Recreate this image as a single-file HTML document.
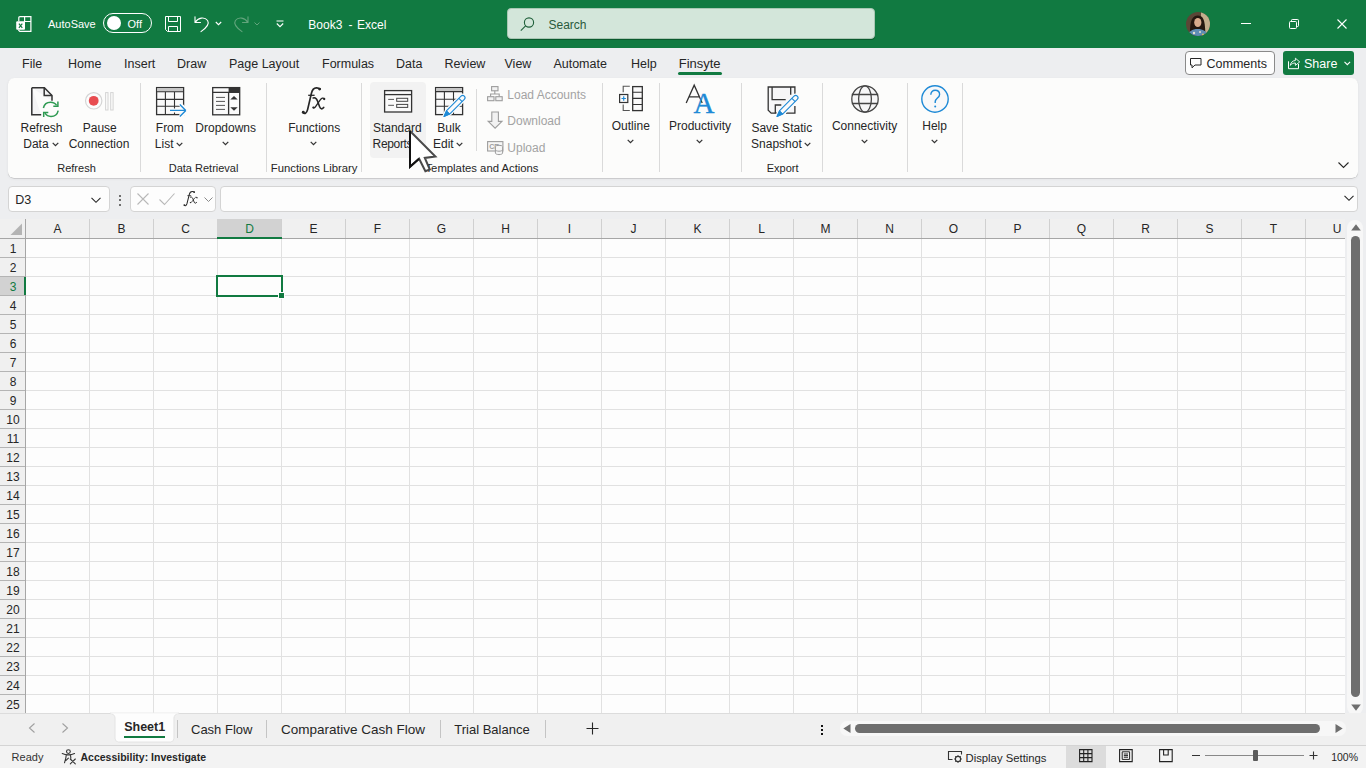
<!DOCTYPE html>
<html><head><meta charset="utf-8"><style>
html,body{margin:0;padding:0;}
body{width:1366px;height:768px;position:relative;overflow:hidden;background:#edeef0;font-family:"Liberation Sans",sans-serif;color:#262626;}
.t{position:absolute;line-height:1;white-space:pre;}
.i{position:absolute;overflow:visible;}
.b{position:absolute;box-sizing:border-box;}
</style></head><body>
<div class="b" style="left:0px;top:0px;width:1366px;height:48px;background:#117a41;"></div>
<svg class="i" style="left:16px;top:16px;" width="16" height="16" viewBox="0 0 16 16"><path d="M2.8 5.3V1.8Q2.8 0.6 4 0.6H14.9V15.4H3.8L2.4 14 M8.6 0.6V5.5H14.9" fill="none" stroke="#fff" stroke-width="1.2"/><rect x="0.2" y="5.3" width="8.8" height="8.5" rx="1" fill="#fff"/><path d="M2.9 7.6l3.4 4.2 M6.3 7.6l-3.4 4.2" stroke="#117a41" stroke-width="1.2"/></svg>
<div class="t" style="top:19.00px;font-size:11px;color:#fff;left:48px;">AutoSave</div>
<div class="b" style="left:103px;top:13px;width:49px;height:20px;border:1px solid #fff;border-radius:10px;"></div>
<div class="b" style="left:107px;top:16px;width:14px;height:14px;background:#fff;border-radius:50%;"></div>
<div class="t" style="top:19.00px;font-size:11px;color:#fff;left:127.5px;">Off</div>
<svg class="i" style="left:165px;top:16px;" width="16" height="16" viewBox="0 0 16 16"><path d="M0.5 0.5h15v15h-13l-2-2z" fill="none" stroke="#fff"/><path d="M3.5 0.5v5h9v-5 M3.5 15.5v-5h9v5" fill="none" stroke="#fff"/></svg>
<svg class="i" style="left:194px;top:16px;" width="16" height="16" viewBox="0 0 16 16"><path d="M1 0.8v5.7h5.5 M1.3 6.3C4 1.5 10.5 0.5 13.6 4.5C15.5 7.5 13.5 11 7 15.6" fill="none" stroke="#fff" stroke-width="1.1" stroke-linecap="round" stroke-linejoin="round"/></svg>
<svg class="i" style="left:215px;top:21px;" width="7" height="5" viewBox="0 0 7 5"><path d="M0.8 1l2.7 2.7l2.7-2.7" fill="none" stroke="#fff" stroke-width="1.1"/></svg>
<svg class="i" style="left:233px;top:16px;" width="16" height="16" viewBox="0 0 16 16"><path d="M15 0.8v5.7h-5.5 M14.7 6.3C12 1.5 5.5 0.5 2.4 4.5C0.5 7.5 2.5 11 9 15.6" fill="none" stroke="#62a47c" stroke-width="1.1" stroke-linecap="round" stroke-linejoin="round"/></svg>
<svg class="i" style="left:254px;top:22px;" width="6" height="4" viewBox="0 0 6 4"><path d="M0.5 0.5l2.5 2.5l2.5-2.5" fill="none" stroke="#62a47c" stroke-width="1"/></svg>
<svg class="i" style="left:276px;top:20px;" width="8" height="8" viewBox="0 0 8 8"><path d="M0.5 1h7 M0.8 3.5l3.2 3.2l3.2-3.2" fill="none" stroke="#fff" stroke-width="1.1"/></svg>
<div class="t" style="top:19.00px;font-size:12px;color:#fff;left:175.3px;width:300px;text-align:center;">Book3</div>
<div class="t" style="top:19.00px;font-size:12px;color:#fff;left:200.5px;width:300px;text-align:center;">-</div>
<div class="t" style="top:19.00px;font-size:12px;color:#fff;left:221.7px;width:300px;text-align:center;">Excel</div>
<div class="b" style="left:507px;top:8px;width:368px;height:31px;background:#d3e6da;border:1px solid #a9c7b4;border-radius:4px;box-shadow:0 1px 0 #0a5a2e;"></div>
<svg class="i" style="left:520px;top:17px;" width="15" height="14" viewBox="0 0 15 14"><circle cx="9" cy="5.5" r="4.6" fill="none" stroke="#1f5f3a" stroke-width="1.1"/><path d="M5.6 8.9L0.8 13.6" stroke="#1f5f3a" stroke-width="1.1"/></svg>
<div class="t" style="top:19.00px;font-size:12px;color:#2a5a3c;left:548.5px;">Search</div>
<svg class="i" style="left:1186px;top:12px;" width="24" height="24" viewBox="0 0 24 24"><defs><clipPath id="avc"><circle cx="12" cy="12" r="12"/></clipPath></defs><g clip-path="url(#avc)"><rect width="24" height="24" fill="#5a4636"/><rect x="15" width="9" height="24" fill="#c2ae8c"/><path d="M4 24C4 14 4 4 11.5 3.5C19 3 19 12 19.5 24z" fill="#24170f"/><ellipse cx="11.8" cy="10.5" rx="3.6" ry="4.6" fill="#d9ab8c"/><path d="M2 24c1-5 4-7 9.5-7s9 2 10.5 7z" fill="#5f8db5"/><circle cx="8" cy="21" r="1.2" fill="#e8e0d0"/><circle cx="14" cy="20" r="1" fill="#e8e0d0"/><circle cx="17" cy="22.5" r="1.1" fill="#d8c060"/></g></svg>
<div class="b" style="left:1241px;top:23px;width:10px;height:1px;background:#fff;"></div>
<svg class="i" style="left:1289px;top:19px;" width="10" height="10" viewBox="0 0 10 10"><path d="M2.5 2.5v-1.2c0-.5.3-.8.8-.8h5.4c.5 0 .8.3.8.8v5.4c0 .5-.3.8-.8.8h-1.2" fill="none" stroke="#fff"/><rect x="0.5" y="2.5" width="7" height="7" rx="1" fill="none" stroke="#fff"/></svg>
<svg class="i" style="left:1337px;top:19px;" width="10" height="10" viewBox="0 0 10 10"><path d="M0.5 0.5l9 9 M9.5 0.5l-9 9" stroke="#fff" stroke-width="1.1"/></svg>
<div class="t" style="top:58.00px;font-size:12.5px;color:#262626;left:22px;">File</div>
<div class="t" style="top:58.00px;font-size:12.5px;color:#262626;left:68px;">Home</div>
<div class="t" style="top:58.00px;font-size:12.5px;color:#262626;left:124px;">Insert</div>
<div class="t" style="top:58.00px;font-size:12.5px;color:#262626;left:177px;">Draw</div>
<div class="t" style="top:58.00px;font-size:12.5px;color:#262626;left:229px;">Page Layout</div>
<div class="t" style="top:58.00px;font-size:12.5px;color:#262626;left:322px;">Formulas</div>
<div class="t" style="top:58.00px;font-size:12.5px;color:#262626;left:396px;">Data</div>
<div class="t" style="top:58.00px;font-size:12.5px;color:#262626;left:444.4px;">Review</div>
<div class="t" style="top:58.00px;font-size:12.5px;color:#262626;left:504.5px;">View</div>
<div class="t" style="top:58.00px;font-size:12.5px;color:#262626;left:553.4px;">Automate</div>
<div class="t" style="top:58.00px;font-size:12.5px;color:#262626;left:631px;">Help</div>
<div class="t" style="top:57.00px;font-size:13px;color:#262626;left:678.7px;">Finsyte</div>
<div class="b" style="left:678px;top:72px;width:44px;height:3px;background:#117a41;border-radius:2px;"></div>
<div class="b" style="left:1185px;top:51px;width:90px;height:24px;background:#fdfdfd;border:1px solid #8a8a8a;border-radius:4px;"></div>
<svg class="i" style="left:1190px;top:58px;" width="12" height="10" viewBox="0 0 12 10"><path d="M0.5 0.5h10.5v6.5h-6l-3 2.8v-2.8h-1.5z" fill="none" stroke="#262626" stroke-width="1"/></svg>
<div class="t" style="top:58.00px;font-size:12.5px;color:#262626;left:1206.5px;">Comments</div>
<div class="b" style="left:1283px;top:51px;width:71px;height:24px;background:#117a41;border-radius:3px;"></div>
<svg class="i" style="left:1288px;top:57px;" width="13" height="13" viewBox="0 0 13 13"><path d="M0.5 4.3V11.7H10.5V6.9" fill="none" stroke="#fff" stroke-width="1"/><path d="M2.3 8.3C2.8 5.4 4.8 3.6 7.4 3.5V1.2L11.7 4.9L7.4 8.4V6C5.3 6 3.6 6.8 2.3 8.3Z" fill="none" stroke="#fff" stroke-width="0.9" stroke-linejoin="round"/></svg>
<div class="t" style="top:58.00px;font-size:12.5px;color:#fff;left:1304px;">Share</div>
<svg class="i" style="left:1344px;top:61px;" width="7" height="5" viewBox="0 0 7 5"><path d="M0.5 0.8l2.8 2.8l2.8-2.8" fill="none" stroke="#fff" stroke-width="1.1"/></svg>
<div class="b" style="left:8px;top:78px;width:1350px;height:100px;background:#fcfcfb;border-radius:6px;box-shadow:0 0.5px 0.5px rgba(0,0,0,0.22),0 1px 3px rgba(0,0,0,0.06);"></div>
<div class="b" style="left:140px;top:83px;width:1px;height:89px;background:#dadada;"></div>
<div class="b" style="left:266px;top:83px;width:1px;height:89px;background:#dadada;"></div>
<div class="b" style="left:361px;top:83px;width:1px;height:89px;background:#dadada;"></div>
<div class="b" style="left:602px;top:83px;width:1px;height:89px;background:#dadada;"></div>
<div class="b" style="left:659px;top:83px;width:1px;height:89px;background:#dadada;"></div>
<div class="b" style="left:741px;top:83px;width:1px;height:89px;background:#dadada;"></div>
<div class="b" style="left:822px;top:83px;width:1px;height:89px;background:#dadada;"></div>
<div class="b" style="left:907px;top:83px;width:1px;height:89px;background:#dadada;"></div>
<div class="b" style="left:962px;top:83px;width:1px;height:89px;background:#dadada;"></div>
<div class="b" style="left:476px;top:89px;width:1px;height:62px;background:#dadada;"></div>
<div class="b" style="left:370px;top:82px;width:56px;height:76px;background:#f2f2f2;border-radius:4px;"></div>
<div class="t" style="top:122.00px;font-size:12px;color:#262626;left:-108.5px;width:300px;text-align:center;">Refresh</div>
<div class="t" style="top:138.00px;font-size:12px;color:#262626;left:-114.1px;width:300px;text-align:center;">Data</div>
<svg class="i" style="left:52px;top:141.6px;" width="7" height="5" viewBox="0 0 7 5"><path d="M0.7 0.9l2.8 2.8l2.8-2.8" fill="none" stroke="#333" stroke-width="1.25"/></svg>
<div class="t" style="top:122.00px;font-size:12px;color:#262626;left:-50.25px;width:300px;text-align:center;">Pause</div>
<div class="t" style="top:138.00px;font-size:12px;color:#262626;left:-51px;width:300px;text-align:center;">Connection</div>
<div class="t" style="top:163.00px;font-size:11px;color:#262626;left:-73.5px;width:300px;text-align:center;">Refresh</div>
<div class="t" style="top:122.00px;font-size:12px;color:#262626;left:19.80000000000001px;width:300px;text-align:center;">From</div>
<div class="t" style="top:138.00px;font-size:12px;color:#262626;left:14.199999999999989px;width:300px;text-align:center;">List</div>
<svg class="i" style="left:176.3px;top:141.6px;" width="7" height="5" viewBox="0 0 7 5"><path d="M0.7 0.9l2.8 2.8l2.8-2.8" fill="none" stroke="#333" stroke-width="1.25"/></svg>
<div class="t" style="top:122.00px;font-size:12px;color:#262626;left:75.69999999999999px;width:300px;text-align:center;">Dropdowns</div>
<svg class="i" style="left:222.2px;top:141.4px;" width="7" height="5" viewBox="0 0 7 5"><path d="M0.7 0.9l2.8 2.8l2.8-2.8" fill="none" stroke="#333" stroke-width="1.25"/></svg>
<div class="t" style="top:163.00px;font-size:11px;color:#262626;left:53.599999999999994px;width:300px;text-align:center;">Data Retrieval</div>
<div class="t" style="top:122.00px;font-size:12px;color:#262626;left:164.2px;width:300px;text-align:center;">Functions</div>
<svg class="i" style="left:310.2px;top:141.4px;" width="7" height="5" viewBox="0 0 7 5"><path d="M0.7 0.9l2.8 2.8l2.8-2.8" fill="none" stroke="#333" stroke-width="1.25"/></svg>
<div class="t" style="top:163.00px;font-size:11.3px;color:#262626;left:164.2px;width:300px;text-align:center;">Functions Library</div>
<div class="t" style="top:122.00px;font-size:12px;color:#262626;left:247.3px;width:300px;text-align:center;">Standard</div>
<div class="t" style="top:138.00px;font-size:12px;color:#262626;left:372.6px;letter-spacing:-0.35px;">Reports</div>
<div class="t" style="top:122.00px;font-size:12px;color:#262626;left:299px;width:300px;text-align:center;">Bulk</div>
<div class="t" style="top:138.00px;font-size:12px;color:#262626;left:293.3px;width:300px;text-align:center;">Edit</div>
<svg class="i" style="left:456.4px;top:141.6px;" width="7" height="5" viewBox="0 0 7 5"><path d="M0.7 0.9l2.8 2.8l2.8-2.8" fill="none" stroke="#333" stroke-width="1.25"/></svg>
<div class="t" style="top:89.00px;font-size:12px;color:#a3a3a3;left:507.3px;">Load Accounts</div>
<div class="t" style="top:115.00px;font-size:12px;color:#a3a3a3;left:507.3px;">Download</div>
<div class="t" style="top:142.00px;font-size:12px;color:#a3a3a3;left:507.3px;">Upload</div>
<div class="t" style="top:163.00px;font-size:11.3px;color:#262626;left:332px;width:300px;text-align:center;">Templates and Actions</div>
<div class="t" style="top:120.00px;font-size:12px;color:#262626;left:480.79999999999995px;width:300px;text-align:center;">Outline</div>
<svg class="i" style="left:627.2px;top:139.4px;" width="7" height="5" viewBox="0 0 7 5"><path d="M0.7 0.9l2.8 2.8l2.8-2.8" fill="none" stroke="#333" stroke-width="1.25"/></svg>
<div class="t" style="top:120.00px;font-size:12px;color:#262626;left:550px;width:300px;text-align:center;">Productivity</div>
<svg class="i" style="left:696.2px;top:139.4px;" width="7" height="5" viewBox="0 0 7 5"><path d="M0.7 0.9l2.8 2.8l2.8-2.8" fill="none" stroke="#333" stroke-width="1.25"/></svg>
<div class="t" style="top:122.00px;font-size:12px;color:#262626;left:631.8px;width:300px;text-align:center;">Save Static</div>
<div class="t" style="top:138.00px;font-size:12px;color:#262626;left:626.4px;width:300px;text-align:center;">Snapshot</div>
<svg class="i" style="left:804.2px;top:141.6px;" width="7" height="5" viewBox="0 0 7 5"><path d="M0.7 0.9l2.8 2.8l2.8-2.8" fill="none" stroke="#333" stroke-width="1.25"/></svg>
<div class="t" style="top:163.00px;font-size:11px;color:#262626;left:632.6px;width:300px;text-align:center;">Export</div>
<div class="t" style="top:120.00px;font-size:12px;color:#262626;left:714.6px;width:300px;text-align:center;">Connectivity</div>
<svg class="i" style="left:861.2px;top:139.4px;" width="7" height="5" viewBox="0 0 7 5"><path d="M0.7 0.9l2.8 2.8l2.8-2.8" fill="none" stroke="#333" stroke-width="1.25"/></svg>
<div class="t" style="top:120.00px;font-size:12px;color:#262626;left:784.6px;width:300px;text-align:center;">Help</div>
<svg class="i" style="left:931.2px;top:139.4px;" width="7" height="5" viewBox="0 0 7 5"><path d="M0.7 0.9l2.8 2.8l2.8-2.8" fill="none" stroke="#333" stroke-width="1.25"/></svg>
<svg class="i" style="left:1338px;top:162px;" width="11" height="6" viewBox="0 0 11 6"><path d="M0.5 0.5l5 5l5-5" fill="none" stroke="#262626" stroke-width="1.1"/></svg>
<svg class="i" style="left:30px;top:86px;" width="30" height="32" viewBox="0 0 30 32"><path d="M1.8 1.8h12.6l7.6 7.8v5.2 M11.2 28.7h-9.4v-26.9" fill="#f4f4f5" stroke="#333" stroke-width="1.5" stroke-linejoin="miter"/><path d="M14.2 1.8v7.8h7.8" fill="none" stroke="#333" stroke-width="1.5"/><path d="M13.4 22c0.8-3.6 3.6-5.8 7.2-5.8c2.6 0 4.8 1.2 6 3.2 M28.2 24.6c-0.8 3.6-3.6 5.8-7.2 5.8c-2.6 0-4.8-1.2-6-3.2" fill="none" stroke="#2e9a52" stroke-width="1.5"/><path d="M27.9 15.6v4.6h-4.6 M13.7 31v-4.6h4.6" fill="none" stroke="#2e9a52" stroke-width="1.5"/></svg>
<svg class="i" style="left:84px;top:91px;" width="30" height="20" viewBox="0 0 30 20"><circle cx="9.7" cy="9.8" r="8.2" fill="#fcfcfc" stroke="#d4d4d4" stroke-width="1.2"/><circle cx="9.7" cy="9.8" r="4.9" fill="#e84c50"/><rect x="21.6" y="1.6" width="2.4" height="17.4" fill="none" stroke="#d4d4d4" stroke-width="1"/><rect x="26.7" y="1.6" width="2.4" height="17.4" fill="none" stroke="#d4d4d4" stroke-width="1"/></svg>
<svg class="i" style="left:155px;top:86px;" width="33" height="32" viewBox="0 0 33 32"><rect x="1.6" y="1.6" width="27" height="27" fill="#fafafa" stroke="#333" stroke-width="1.3"/><rect x="2.2" y="2.2" width="25.8" height="3.6" fill="#c6c6c6"/><path d="M1.6 5.8h27 M10.4 5.8v23 M19.5 5.8v23 M1.6 13.4h27 M1.6 20.3h27" fill="none" stroke="#333" stroke-width="1.1"/><path d="M14 24.4h17 M31.5 24.4l-6.5-6.3 M31.5 24.4l-6.5 6.3" fill="none" stroke="#fcfcfc" stroke-width="4"/><path d="M15 24.4h15.5 M30.8 24.4l-6-6 M30.8 24.4l-6 6" fill="none" stroke="#1f8ad6" stroke-width="1.4"/></svg>
<svg class="i" style="left:211px;top:86px;" width="30" height="30" viewBox="0 0 30 30"><rect x="1.7" y="1.6" width="27" height="27.2" fill="#fafafa" stroke="#333" stroke-width="1.3"/><rect x="17.6" y="1.6" width="11.1" height="5" fill="#333"/><path d="M1.7 6.4h27 M17.6 6.4v22.4" stroke="#333" stroke-width="1.3"/><path d="M5 11.4h9 M5 15.4h9 M5 19.4h9 M5 23.4h9" stroke="#555" stroke-width="1"/><path d="M19.3 13.6l3.7-3.5l3.7 3.5z M19.3 21.2l3.7 3.5l3.7-3.5z" fill="#333"/></svg>
<svg class="i" style="left:301px;top:87px;" width="25" height="28" viewBox="0 0 25 28"><path d="M1.9 25.4C3.6 27.4 5.6 26.4 6.6 22.6L10.4 6.4C11.3 2.4 13.4 0.8 15.6 0.9C17 1 18.3 1.4 18.9 1.9" fill="none" stroke="#262626" stroke-width="1.7" stroke-linecap="round"/><circle cx="18.6" cy="2.1" r="1.45" fill="#262626"/><circle cx="2.3" cy="25.2" r="1.45" fill="#262626"/><path d="M7.2 8.3H13.6" stroke="#262626" stroke-width="1.3"/><path d="M12.2 10.9C14.4 10.2 15.5 11.2 16.4 13.8L18.6 19.8C19.6 22.4 21 22.4 22.7 20.4" fill="none" stroke="#262626" stroke-width="1.6" stroke-linecap="round"/><path d="M23.3 11.8C22.2 10.6 20.8 10.9 19.4 12.6L15.1 18.9C14 20.6 13 21.1 12.3 20.5" fill="none" stroke="#262626" stroke-width="1.3" stroke-linecap="round"/><circle cx="23.2" cy="12" r="1.15" fill="#262626"/><circle cx="12.4" cy="20.6" r="1.1" fill="#262626"/></svg>
<svg class="i" style="left:383px;top:89px;" width="30" height="24" viewBox="0 0 30 24"><rect x="1.6" y="1.6" width="27" height="21.4" fill="#fafafa" stroke="#333" stroke-width="1.3"/><path d="M1.6 5.6h27" stroke="#333" stroke-width="1.3"/><path d="M5.2 10.4h5.8 M5.2 16.3h5.8" stroke="#555" stroke-width="1"/><rect x="13.7" y="9.3" width="11" height="3" fill="none" stroke="#444" stroke-width="1"/><rect x="13.7" y="15.4" width="11" height="3" fill="none" stroke="#444" stroke-width="1"/></svg>
<svg class="i" style="left:434px;top:86px;" width="34" height="32" viewBox="0 0 34 32"><rect x="1.6" y="1.6" width="27" height="27" fill="#fafafa" stroke="#333" stroke-width="1.3"/><rect x="2.2" y="2.2" width="25.8" height="3.4" fill="#c6c6c6"/><path d="M1.6 5.6h27 M10.4 5.6v23 M19.5 5.6v23 M1.6 13.2h27 M1.6 20.3h27" fill="none" stroke="#333" stroke-width="1.1"/><path d="M10 30.5L12.61 24.63L27.04 10.2A2.3 2.3 0 0 1 30.3 13.46L15.87 27.89Z" fill="#fcfcfc" stroke="#fcfcfc" stroke-width="3.5"/><path d="M10 30.5L12.61 24.63L27.04 10.2A2.3 2.3 0 0 1 30.3 13.46L15.87 27.89Z" fill="#fafafa" stroke="#1f8ad6" stroke-width="1.15" stroke-linejoin="round"/><path d="M10 30.5L12.61 24.63L15.87 27.89Z" fill="#1f8ad6" stroke="#1f8ad6" stroke-width="0.8"/><path d="M24.92 12.32L28.18 15.58" stroke="#1f8ad6" stroke-width="1.1"/></svg>
<svg class="i" style="left:486px;top:85px;" width="18" height="17" viewBox="0 0 18 17"><rect x="5.6" y="1.6" width="6.4" height="4.2" fill="#f2f2f2" stroke="#9d9d9d" stroke-width="1.1"/><path d="M8.8 5.8v3.2 M4.6 11.7v-2.7h8.6v2.7" fill="none" stroke="#9d9d9d" stroke-width="1.1"/><rect x="1.6" y="11.7" width="6.4" height="4" fill="#f2f2f2" stroke="#9d9d9d" stroke-width="1.1"/><rect x="9.8" y="11.7" width="6.4" height="4" fill="#f2f2f2" stroke="#9d9d9d" stroke-width="1.1"/></svg>
<svg class="i" style="left:487px;top:111px;" width="16" height="18" viewBox="0 0 16 18"><path d="M4.8 1v9.4h-3.6l6.9 6.8l6.9-6.8h-3.6v-9.4z" fill="#f2f2f2" stroke="#9d9d9d" stroke-width="1.1" stroke-linejoin="miter"/></svg>
<svg class="i" style="left:486px;top:140px;" width="18" height="15" viewBox="0 0 18 15"><rect x="1.6" y="1.6" width="15.3" height="9.4" fill="#f6f6f6" stroke="#9d9d9d" stroke-width="1.1"/><text x="3.2" y="9" font-size="7" font-family="Liberation Sans" font-weight="700" fill="#9d9d9d">CR</text><ellipse cx="13" cy="6.8" rx="3.6" ry="1.5" fill="#f6f6f6" stroke="#9d9d9d" stroke-width="1"/><path d="M9.4 6.8v6.3c0 0.8 1.6 1.5 3.6 1.5s3.6-0.7 3.6-1.5v-6.3 M9.4 9.7c0 0.8 1.6 1.5 3.6 1.5s3.6-0.7 3.6-1.5" fill="#f6f6f6" stroke="#9d9d9d" stroke-width="1"/></svg>
<svg class="i" style="left:618px;top:85px;" width="26" height="27" viewBox="0 0 26 27"><path d="M11.8 1.3h-6.6v6 M5.2 19.5v6h6.6" fill="none" stroke="#555" stroke-width="1.1"/><rect x="14.7" y="1.6" width="9.6" height="24" fill="#fafafa" stroke="#333" stroke-width="1.3"/><path d="M14.7 7.3h9.6 M14.7 13.4h9.6 M14.7 19.5h9.6" stroke="#333" stroke-width="1.1"/><rect x="1.6" y="9.5" width="8.2" height="8" fill="#fafafa" stroke="#333" stroke-width="1.2"/><path d="M5.7 11.3v4.4 M3.5 13.5h4.4" stroke="#1f8ad6" stroke-width="1.2"/></svg>
<svg class="i" style="left:685px;top:84px;" width="18" height="21" viewBox="0 0 18 21"><path d="M1.2 19L9.2 1.2L17.2 19 M4 12.8H14.4" fill="none" stroke="#333" stroke-width="1.3"/></svg>
<div class="t" style="left:693.5px;top:88.5px;font-size:29px;font-family:'Liberation Serif',serif;color:#1f8ad6;line-height:1;font-weight:400;-webkit-text-stroke:0.35px #1f8ad6;">A</div>
<svg class="i" style="left:767px;top:86px;" width="33" height="32" viewBox="0 0 33 32"><path d="M27.9 8.5v-7.5h-26.7v23.2l3 3h7.3 M19 27.2h8.9v-7.2" fill="#f6f6f7" stroke="#333" stroke-width="1.3"/><path d="M5.1 1v12.6h13.6 M23.7 1v7.8" fill="none" stroke="#333" stroke-width="1.3"/><path d="M8.3 27.2v-8.2h6" fill="none" stroke="#333" stroke-width="1.3"/><path d="M10 30.5L12.61 24.63L27.04 10.2A2.3 2.3 0 0 1 30.3 13.46L15.87 27.89Z" fill="#fcfcfc" stroke="#fcfcfc" stroke-width="3.5"/><path d="M10 30.5L12.61 24.63L27.04 10.2A2.3 2.3 0 0 1 30.3 13.46L15.87 27.89Z" fill="#fafafa" stroke="#1f8ad6" stroke-width="1.15" stroke-linejoin="round"/><path d="M10 30.5L12.61 24.63L15.87 27.89Z" fill="#1f8ad6" stroke="#1f8ad6" stroke-width="0.8"/><path d="M24.92 12.32L28.18 15.58" stroke="#1f8ad6" stroke-width="1.1"/></svg>
<svg class="i" style="left:850px;top:84px;" width="30" height="30" viewBox="0 0 30 30"><circle cx="15" cy="15" r="13.2" fill="#f6f6f7" stroke="#444" stroke-width="1.3"/><ellipse cx="15" cy="15" rx="6.4" ry="13.2" fill="none" stroke="#444" stroke-width="1.3"/><path d="M1.8 10.5h26.4 M1.8 19.5h26.4" stroke="#444" stroke-width="1.3"/></svg>
<svg class="i" style="left:920px;top:84px;" width="30" height="30" viewBox="0 0 30 30"><circle cx="15" cy="15" r="13.2" fill="#f8f8f9" stroke="#1f8ad6" stroke-width="1.4"/><path d="M10.8 10.8c0-2.8 1.9-4.6 4.4-4.6c2.6 0 4.4 1.8 4.4 4.2c0 3.4-4.4 3.8-4.4 7.4v1.2" fill="none" stroke="#1f8ad6" stroke-width="1.4"/><circle cx="15.2" cy="22.5" r="1" fill="#1f8ad6"/></svg>
<svg class="i" style="left:408px;top:129px;" width="30" height="44" viewBox="0 0 30 44"><path d="M2 2v35.8l9.1-8.1l6.3 12.6l4.4-1.8l-5-11.6l10.6-1.3z" fill="#fff" stroke="#4a4a4a" stroke-width="2" stroke-linejoin="miter"/><path d="M2 2v35.8l9.1-8.1" fill="none" stroke="#111" stroke-width="2"/></svg>
<div class="b" style="left:8px;top:186px;width:102px;height:26px;background:#fdfdfd;border:1px solid #d4d4d4;border-radius:4px;"></div>
<div class="t" style="top:194.00px;font-size:12.5px;color:#262626;left:15.2px;">D3</div>
<svg class="i" style="left:91px;top:197px;" width="10" height="6" viewBox="0 0 10 6"><path d="M0.5 0.8l4.5 4.5l4.5-4.5" fill="none" stroke="#262626" stroke-width="1.1"/></svg>
<div class="b" style="left:119px;top:194.5px;width:2px;height:2px;background:#444;border-radius:1px;"></div>
<div class="b" style="left:119px;top:199px;width:2px;height:2px;background:#444;border-radius:1px;"></div>
<div class="b" style="left:119px;top:203.5px;width:2px;height:2px;background:#444;border-radius:1px;"></div>
<div class="b" style="left:130px;top:186px;width:86px;height:26px;background:#fdfdfd;border:1px solid #d4d4d4;border-radius:4px;"></div>
<svg class="i" style="left:137px;top:193px;" width="12" height="12" viewBox="0 0 12 12"><path d="M0.5 0.5l11 11 M11.5 0.5l-11 11" stroke="#b8b8b8" stroke-width="1.1"/></svg>
<svg class="i" style="left:159px;top:193px;" width="16" height="12" viewBox="0 0 16 12"><path d="M0.5 6.5l5 5l10-11" fill="none" stroke="#b8b8b8" stroke-width="1.1"/></svg>
<svg class="i" style="left:183px;top:191px;" width="15" height="16" viewBox="0 0 15 16"><g transform="scale(0.6,0.56)"><path d="M1.9 25.4C3.6 27.4 5.6 26.4 6.6 22.6L10.4 6.4C11.3 2.4 13.4 0.8 15.6 0.9C17 1 18.3 1.4 18.9 1.9" fill="none" stroke="#262626" stroke-width="1.7" stroke-linecap="round"/><circle cx="18.6" cy="2.1" r="1.45" fill="#262626"/><circle cx="2.3" cy="25.2" r="1.45" fill="#262626"/><path d="M7.2 8.3H13.6" stroke="#262626" stroke-width="1.3"/><path d="M12.2 10.9C14.4 10.2 15.5 11.2 16.4 13.8L18.6 19.8C19.6 22.4 21 22.4 22.7 20.4" fill="none" stroke="#262626" stroke-width="1.6" stroke-linecap="round"/><path d="M23.3 11.8C22.2 10.6 20.8 10.9 19.4 12.6L15.1 18.9C14 20.6 13 21.1 12.3 20.5" fill="none" stroke="#262626" stroke-width="1.3" stroke-linecap="round"/><circle cx="23.2" cy="12" r="1.15" fill="#262626"/><circle cx="12.4" cy="20.6" r="1.1" fill="#262626"/></g></svg>
<svg class="i" style="left:204px;top:197px;" width="9" height="5" viewBox="0 0 9 5"><path d="M0.5 0.5l4 4l4-4" fill="none" stroke="#8a8a8a" stroke-width="1"/></svg>
<div class="b" style="left:220px;top:186px;width:1138px;height:26px;background:#fdfdfd;border:1px solid #d4d4d4;border-radius:4px;"></div>
<svg class="i" style="left:1344px;top:195px;" width="10" height="6" viewBox="0 0 10 6"><path d="M0.5 0.8l4.5 4.5l4.5-4.5" fill="none" stroke="#262626" stroke-width="1.1"/></svg>
<div class="b" style="left:0px;top:219px;width:1345px;height:19px;background:#f0f0f0;"></div>
<div class="b" style="left:0px;top:239px;width:25px;height:474px;background:#f0f0f0;"></div>
<div class="b" style="left:26px;top:239px;width:1319px;height:474px;background-color:#fdfdfd;background-image:repeating-linear-gradient(90deg,transparent 0 63px,#e1e1e1 63px 64px),repeating-linear-gradient(180deg,transparent 0 18px,#e1e1e1 18px 19px);"></div>
<div class="b" style="left:26px;top:219px;width:1319px;height:19px;background-image:repeating-linear-gradient(90deg,transparent 0 63px,#d0d0d0 63px 64px);"></div>
<div class="b" style="left:0px;top:238px;width:1345px;height:1px;background:#a6a6a6;"></div>
<div class="b" style="left:25px;top:219px;width:1px;height:494px;background:#a6a6a6;"></div>
<div class="b" style="left:0;top:239px;width:25px;height:474px;background-image:repeating-linear-gradient(180deg,transparent 0 18px,#b4b4b4 18px 19px);"></div>
<div class="b" style="left:0px;top:713px;width:1345px;height:1px;background:#dcdcdc;"></div>
<svg class="i" style="left:10px;top:223px;" width="13" height="13" viewBox="0 0 13 13"><path d="M12 0.5v11.5h-11.5z" fill="#b4b4b4"/></svg>
<div class="b" style="left:217px;top:219px;width:64px;height:18px;background:#d2d2d2;"></div>
<div class="b" style="left:217px;top:237px;width:65px;height:2px;background:#117a41;"></div>
<div class="b" style="left:0px;top:277px;width:25px;height:18px;background:#d2d2d2;"></div>
<div class="b" style="left:24px;top:277px;width:2px;height:18px;background:#117a41;"></div>
<div class="t" style="top:223.00px;font-size:12px;color:#262626;left:-92.5px;width:300px;text-align:center;">A</div>
<div class="t" style="top:223.00px;font-size:12px;color:#262626;left:-28.5px;width:300px;text-align:center;">B</div>
<div class="t" style="top:223.00px;font-size:12px;color:#262626;left:35.5px;width:300px;text-align:center;">C</div>
<div class="t" style="top:223.00px;font-size:12px;color:#117a41;left:99.5px;width:300px;text-align:center;">D</div>
<div class="t" style="top:223.00px;font-size:12px;color:#262626;left:163.5px;width:300px;text-align:center;">E</div>
<div class="t" style="top:223.00px;font-size:12px;color:#262626;left:227.5px;width:300px;text-align:center;">F</div>
<div class="t" style="top:223.00px;font-size:12px;color:#262626;left:291.5px;width:300px;text-align:center;">G</div>
<div class="t" style="top:223.00px;font-size:12px;color:#262626;left:355.5px;width:300px;text-align:center;">H</div>
<div class="t" style="top:223.00px;font-size:12px;color:#262626;left:419.5px;width:300px;text-align:center;">I</div>
<div class="t" style="top:223.00px;font-size:12px;color:#262626;left:483.5px;width:300px;text-align:center;">J</div>
<div class="t" style="top:223.00px;font-size:12px;color:#262626;left:547.5px;width:300px;text-align:center;">K</div>
<div class="t" style="top:223.00px;font-size:12px;color:#262626;left:611.5px;width:300px;text-align:center;">L</div>
<div class="t" style="top:223.00px;font-size:12px;color:#262626;left:675.5px;width:300px;text-align:center;">M</div>
<div class="t" style="top:223.00px;font-size:12px;color:#262626;left:739.5px;width:300px;text-align:center;">N</div>
<div class="t" style="top:223.00px;font-size:12px;color:#262626;left:803.5px;width:300px;text-align:center;">O</div>
<div class="t" style="top:223.00px;font-size:12px;color:#262626;left:867.5px;width:300px;text-align:center;">P</div>
<div class="t" style="top:223.00px;font-size:12px;color:#262626;left:931.5px;width:300px;text-align:center;">Q</div>
<div class="t" style="top:223.00px;font-size:12px;color:#262626;left:995.5px;width:300px;text-align:center;">R</div>
<div class="t" style="top:223.00px;font-size:12px;color:#262626;left:1059.5px;width:300px;text-align:center;">S</div>
<div class="t" style="top:223.00px;font-size:12px;color:#262626;left:1123.5px;width:300px;text-align:center;">T</div>
<div class="t" style="top:223.00px;font-size:12px;color:#262626;left:1187px;width:300px;text-align:center;">U</div>
<div class="t" style="top:243.00px;font-size:12px;color:#262626;left:-137px;width:300px;text-align:center;">1</div>
<div class="t" style="top:262.00px;font-size:12px;color:#262626;left:-137px;width:300px;text-align:center;">2</div>
<div class="t" style="top:281.00px;font-size:12px;color:#117a41;left:-137px;width:300px;text-align:center;">3</div>
<div class="t" style="top:300.00px;font-size:12px;color:#262626;left:-137px;width:300px;text-align:center;">4</div>
<div class="t" style="top:319.00px;font-size:12px;color:#262626;left:-137px;width:300px;text-align:center;">5</div>
<div class="t" style="top:338.00px;font-size:12px;color:#262626;left:-137px;width:300px;text-align:center;">6</div>
<div class="t" style="top:357.00px;font-size:12px;color:#262626;left:-137px;width:300px;text-align:center;">7</div>
<div class="t" style="top:376.00px;font-size:12px;color:#262626;left:-137px;width:300px;text-align:center;">8</div>
<div class="t" style="top:395.00px;font-size:12px;color:#262626;left:-137px;width:300px;text-align:center;">9</div>
<div class="t" style="top:414.00px;font-size:12px;color:#262626;left:-137px;width:300px;text-align:center;">10</div>
<div class="t" style="top:433.00px;font-size:12px;color:#262626;left:-137px;width:300px;text-align:center;">11</div>
<div class="t" style="top:452.00px;font-size:12px;color:#262626;left:-137px;width:300px;text-align:center;">12</div>
<div class="t" style="top:471.00px;font-size:12px;color:#262626;left:-137px;width:300px;text-align:center;">13</div>
<div class="t" style="top:490.00px;font-size:12px;color:#262626;left:-137px;width:300px;text-align:center;">14</div>
<div class="t" style="top:509.00px;font-size:12px;color:#262626;left:-137px;width:300px;text-align:center;">15</div>
<div class="t" style="top:528.00px;font-size:12px;color:#262626;left:-137px;width:300px;text-align:center;">16</div>
<div class="t" style="top:547.00px;font-size:12px;color:#262626;left:-137px;width:300px;text-align:center;">17</div>
<div class="t" style="top:566.00px;font-size:12px;color:#262626;left:-137px;width:300px;text-align:center;">18</div>
<div class="t" style="top:585.00px;font-size:12px;color:#262626;left:-137px;width:300px;text-align:center;">19</div>
<div class="t" style="top:604.00px;font-size:12px;color:#262626;left:-137px;width:300px;text-align:center;">20</div>
<div class="t" style="top:623.00px;font-size:12px;color:#262626;left:-137px;width:300px;text-align:center;">21</div>
<div class="t" style="top:642.00px;font-size:12px;color:#262626;left:-137px;width:300px;text-align:center;">22</div>
<div class="t" style="top:661.00px;font-size:12px;color:#262626;left:-137px;width:300px;text-align:center;">23</div>
<div class="t" style="top:680.00px;font-size:12px;color:#262626;left:-137px;width:300px;text-align:center;">24</div>
<div class="t" style="top:699.00px;font-size:12px;color:#262626;left:-137px;width:300px;text-align:center;">25</div>
<div class="b" style="left:216px;top:275px;width:67px;height:22px;border:2px solid #117a41;"></div>
<div class="b" style="left:278px;top:292px;width:7px;height:7px;background:#117a41;border:1px solid #fdfdfd;"></div>
<div class="b" style="left:1345px;top:219px;width:21px;height:494px;background:#edeef0;"></div>
<div class="b" style="left:1347px;top:220px;width:16px;height:495px;background:#f7f7f7;border-radius:8px;"></div>
<svg class="i" style="left:1351px;top:224px;" width="10" height="7" viewBox="0 0 10 7"><path d="M5 0.2l4.8 6.3h-9.6z" fill="#6e6e6e"/></svg>
<div class="b" style="left:1351px;top:236px;width:9px;height:461px;background:#6e6e6e;border-radius:4.5px;"></div>
<svg class="i" style="left:1351px;top:704px;" width="10" height="7" viewBox="0 0 10 7"><path d="M5 6.8l4.8-6.3h-9.6z" fill="#6e6e6e"/></svg>
<div class="b" style="left:0px;top:714px;width:1345px;height:31px;background:#f0f0f0;"></div>
<div class="b" style="left:1345px;top:713px;width:21px;height:32px;background:#f0f0f0;"></div>
<div class="b" style="left:0px;top:745px;width:1366px;height:1px;background:#d4d4d4;"></div>
<div class="b" style="left:0px;top:746px;width:1366px;height:22px;background:#f3f3f3;"></div>
<svg class="i" style="left:28px;top:723px;" width="8" height="10" viewBox="0 0 8 10"><path d="M6.5 0.5l-5 4.5l5 4.5" fill="none" stroke="#a0a0a0" stroke-width="1.1"/></svg>
<svg class="i" style="left:61px;top:723px;" width="8" height="10" viewBox="0 0 8 10"><path d="M1.5 0.5l5 4.5l-5 4.5" fill="none" stroke="#a0a0a0" stroke-width="1.1"/></svg>
<svg class="i" style="left:110px;top:713px;" width="69" height="30" viewBox="0 0 69 30"><path d="M0 0H69V0.6A4.6 4.6 0 0 0 63.9 5V25.4A3.6 3.6 0 0 1 60.3 29H8.7A3.6 3.6 0 0 1 5.1 25.4V5A4.6 4.6 0 0 0 0 0.6Z" fill="#fdfdfd" stroke="#d8d8d8" stroke-width="0.6"/><path d="M0.5 -0.2H68.5V0.4H0.5z" fill="#fdfdfd"/></svg>
<div class="t" style="top:721.00px;font-size:12.5px;color:#262626;font-weight:700;left:124.2px;">Sheet1</div>
<div class="b" style="left:124px;top:736px;width:41px;height:2px;background:#117a41;"></div>
<div class="b" style="left:177px;top:720px;width:1px;height:18px;background:#c4c4c4;"></div>
<div class="b" style="left:266px;top:720px;width:1px;height:18px;background:#c4c4c4;"></div>
<div class="b" style="left:440px;top:720px;width:1px;height:18px;background:#c4c4c4;"></div>
<div class="b" style="left:545px;top:720px;width:1px;height:18px;background:#c4c4c4;"></div>
<div class="t" style="top:723.00px;font-size:13px;color:#262626;left:191px;">Cash Flow</div>
<div class="t" style="top:723.00px;font-size:13.5px;color:#262626;left:281px;">Comparative Cash Flow</div>
<div class="t" style="top:723.00px;font-size:13px;color:#262626;left:454.3px;">Trial Balance</div>
<svg class="i" style="left:586px;top:722px;" width="13" height="13" viewBox="0 0 13 13"><path d="M6.5 0.5v12 M0.5 6.5h12" stroke="#262626" stroke-width="1.1"/></svg>
<div class="b" style="left:821px;top:725px;width:2px;height:2px;background:#111;"></div>
<div class="b" style="left:821px;top:729px;width:2px;height:2px;background:#111;"></div>
<div class="b" style="left:821px;top:733px;width:2px;height:2px;background:#111;"></div>
<div class="b" style="left:840px;top:721px;width:506px;height:15px;background:#f7f7f7;border-radius:7px;"></div>
<svg class="i" style="left:843px;top:724px;" width="8" height="9" viewBox="0 0 8 9"><path d="M0.3 4.5l7.2-4.5v9z" fill="#6e6e6e"/></svg>
<div class="b" style="left:855px;top:724px;width:465px;height:9px;background:#6e6e6e;border-radius:4.5px;"></div>
<svg class="i" style="left:1335px;top:724px;" width="8" height="9" viewBox="0 0 8 9"><path d="M7.7 4.5l-7.2-4.5v9z" fill="#6e6e6e"/></svg>
<div class="t" style="top:752.00px;font-size:11px;color:#333;left:11.6px;">Ready</div>
<svg class="i" style="left:61px;top:749px;" width="16" height="15" viewBox="0 0 16 15"><circle cx="7.4" cy="2.6" r="1.9" fill="none" stroke="#333" stroke-width="1.1"/><path d="M1.3 4.6c2 1 4 1.3 6.1 1.3s4.1-.3 6.1-1.3 M5.2 6.2c0 2-.5 4-1.7 7.6 M9.6 6.2c0 1.2.1 2.2.3 3 M5 11.4l2.4-2.2 M9.3 10l5 4.8 M14.3 10l-5 4.8" fill="none" stroke="#333" stroke-width="1.1" stroke-linecap="round"/></svg>
<div class="t" style="top:752.00px;font-size:10.5px;color:#262626;font-weight:700;left:80.5px;">Accessibility: Investigate</div>
<svg class="i" style="left:947px;top:750px;" width="17" height="14" viewBox="0 0 17 14"><path d="M5.5 9.5H1.5V1.5H14.5V4.5" fill="none" stroke="#333" stroke-width="1.1"/><circle cx="11" cy="9" r="2.6" fill="none" stroke="#333" stroke-width="1.1"/><path d="M11 5.2v1.2 M11 11.6v1.2 M7.2 9h1.2 M13.6 9h1.2 M8.3 6.3l.9.9 M12.8 10.8l.9.9 M8.3 11.7l.9-.9 M12.8 7.2l.9-.9" stroke="#333" stroke-width="1.1"/></svg>
<div class="t" style="top:753.00px;font-size:11.3px;color:#262626;left:965.5px;">Display Settings</div>
<div class="b" style="left:1066px;top:746px;width:40px;height:22px;background:#dcdcdc;"></div>
<svg class="i" style="left:1079px;top:749px;" width="14" height="13" viewBox="0 0 14 13"><path d="M0.6 0.6h12.4v12h-12.4z M4.7 0.6v12 M8.9 0.6v12 M0.6 4.6h12.4 M0.6 8.6h12.4" fill="none" stroke="#222" stroke-width="1.1"/></svg>
<svg class="i" style="left:1119px;top:749px;" width="14" height="13" viewBox="0 0 14 13"><path d="M0.6 0.6h12.6v12h-12.6z" fill="none" stroke="#222" stroke-width="1.1"/><path d="M3.2 2.8h7.4v7.6h-7.4z M4.8 5h4.2 M4.8 6.6h4.2 M4.8 8.2h4.2" fill="none" stroke="#222" stroke-width="1"/></svg>
<svg class="i" style="left:1159px;top:749px;" width="14" height="13" viewBox="0 0 14 13"><path d="M0.6 0.6h12.6v12h-12.6z M4.6 0.6v5.4h4.6v-5.4" fill="none" stroke="#222" stroke-width="1.1"/></svg>
<div class="t" style="top:752.00px;font-size:10.5px;color:#262626;left:1058px;width:300px;text-align:right;">100%</div>
<div class="b" style="left:1205px;top:755px;width:99px;height:1px;background:#888;"></div>
<div class="b" style="left:1253px;top:750px;width:5px;height:11px;background:#5a5a5a;border-radius:1px;"></div>
<div class="b" style="left:1192px;top:755px;width:8px;height:1.3px;background:#333;"></div>
<svg class="i" style="left:1309px;top:751px;" width="9" height="9" viewBox="0 0 9 9"><path d="M4.5 0.5v8 M0.5 4.5h8" stroke="#333" stroke-width="1.1"/></svg>
</body></html>
